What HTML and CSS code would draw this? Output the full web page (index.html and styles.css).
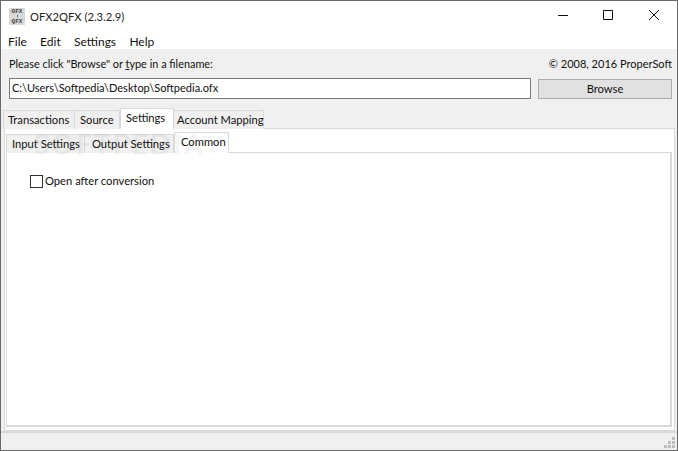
FILE: index.html
```html
<!DOCTYPE html>
<html lang="en">
<head>
<meta charset="utf-8">
<title>OFX2QFX</title>
<link rel="stylesheet" href="styles.css">
</head>
<body>
<div class="window">
  <header class="titlebar">
    <div class="app-icon"><span>OFX</span><i></i><span>QFX</span></div>
    <div class="title">OFX2QFX (2.3.2.9)</div>
    <div class="controls">
      <svg class="ctl" width="46" height="30" viewBox="0 0 46 30"><path d="M19 14.5h10" stroke="#111" fill="none"/></svg>
      <svg class="ctl" width="46" height="30" viewBox="0 0 46 30"><path d="M18.5 9.5h9v9h-9z" stroke="#111" fill="none"/></svg>
      <svg class="ctl" width="46" height="30" viewBox="0 0 46 30"><path d="M18 9l10 10M28 9l-10 10" stroke="#111" fill="none"/></svg>
    </div>
  </header>
  <nav class="menubar">
    <span class="menu">File</span><span class="menu">Edit</span><span class="menu">Settings</span><span class="menu">Help</span>
  </nav>
  <main class="content">
    <div class="file-row">
      <div class="file-col">
        <div class="file-label">Please click "Browse" or <u>t</u>ype in a filename:</div>
        <div class="file-input">C:\Users\Softpedia\Desktop\Softpedia.ofx</div>
      </div>
      <div class="browse-col">
        <div class="copyright">© 2008, 2016 ProperSoft</div>
        <div class="browse">Browse</div>
      </div>
    </div>
    <div class="tabs outer-tabs">
      <div class="tab tab-transactions">Transactions</div>
      <div class="tab tab-source">Source</div>
      <div class="tab active tab-settings">Settings</div>
      <div class="tab tab-mapping">Account Mapping</div>
    </div>
    <section class="outer-panel">
      <div class="tabs inner-tabs">
        <div class="tab tab-input">Input Settings</div>
        <div class="tab tab-output">Output Settings</div>
        <div class="tab active tab-common">Common</div>
      </div>
      <div class="inner-panel">
        <label class="check-row"><span class="checkbox"></span><span>Open after conversion</span></label>
      </div>
    </section>
  </main>
  <footer class="statusbar">
    <svg class="grip" width="12" height="12" viewBox="0 0 12 12" fill="#bdbdbd"><path d="M8 0h3v3H8zM4 4h3v3H4zM8 4h3v3H8zM0 8h3v3H0zM4 8h3v3H4zM8 8h3v3H8z"/></svg>
  </footer>
  <div class="watermark">SOFTPEDIA</div>
</div>
</body>
</html>
```
FILE: styles.css
```css
* { box-sizing: border-box; }
html, body { margin: 0; padding: 0; }
body { width: 678px; height: 451px; overflow: hidden; font-family: "Lato", "Roboto", sans-serif; font-size: 11.2px; color: #111; white-space: nowrap; }
.window { position: relative; width: 678px; height: 451px; border: 1px solid #6a6a6a; background: #f0f0f0; display: flex; flex-direction: column; }
.titlebar { height: 30px; background: #fff; display: flex; align-items: center; padding-left: 8px; }
.app-icon { width: 16px; height: 17px; background: #d8d8d8; display: flex; flex-direction: column; align-items: center; justify-content: space-between; font-family: "Liberation Mono", monospace; font-size: 6px; line-height: 7px; font-weight: 700; color: #444; }
.app-icon i { width: 1px; height: 2px; background: #666; }
.title { margin-left: 5px; font-size: 11.2px; color: #222; }
.controls { margin-left: auto; display: flex; }
.ctl { display: block; }
.menubar { height: 18px; background: #fff; display: flex; padding-left: 7px; font-size: 12px; line-height: 21px; gap: 13.3px; }
.content { flex: 1; display: flex; flex-direction: column; padding-top: 7px; min-height: 0; }
.file-row { display: flex; padding: 0 5px 0 8px; gap: 7px; }
.file-col { width: 522px; }
.browse-col { flex: 1; }
.file-label { height: 22px; line-height: 16px; font-size: 10.9px; }
.copyright { height: 23px; line-height: 16px; text-align: right; font-size: 11px; }
.file-input { height: 21px; background: #fff; border: 1px solid #7a7a7a; line-height: 18px; padding-left: 2px; font-size: 11px; }
.browse { height: 20px; background: #e1e1e1; border: 1px solid #adadad; text-align: center; line-height: 18px; }
.tabs { display: flex; align-items: flex-end; }
.outer-tabs { height: 30px; padding-left: 2px; margin-bottom: -1px; position: relative; z-index: 1; }
.tab { height: 19px; line-height: 17px; border: 1px solid #d9d9d9; border-bottom: 0; border-left: 0; background: #f0f0f0; padding-left: 4px; }
.tab-transactions { width: 72px; border-left: 1px solid #d9d9d9; }
.tab-source { width: 45px; padding-left: 5px; }
.tab.active { height: 21px; background: #fff; border: 1px solid #d9d9d9; border-bottom: 0; line-height: 18px; }
.tab-settings { width: 54px; padding-left: 5px; }
.tab-mapping { width: 90px; padding-left: 3px; }
.outer-panel { flex: 1; margin: 0 2px 0 3px; background: #fff; border: 1px solid #d9d9d9; padding: 3px 2px 3px 1px; display: flex; flex-direction: column; min-height: 0; }
.inner-tabs { height: 21px; margin-bottom: -1px; position: relative; z-index: 1; }
.tab-input { width: 79px; padding-left: 5px; border-left: 1px solid #d9d9d9; }
.tab-output { width: 89px; padding-left: 7px; }
.tab-common { width: 55px; padding-left: 6px; }
.inner-panel { flex: 1; background: #fff; border: 1px solid #d9d9d9; border-width: 1px 2px 2px 1px; padding: 20px 0 0 23px; }
.check-row { display: flex; align-items: center; gap: 2px; line-height: 16px; }
.checkbox { width: 13px; height: 13px; border: 1px solid #333; background: #fff; }
.statusbar { height: 19px; background: #f0f0f0; border-top: 2px solid #d9d9d9; display: flex; justify-content: flex-end; align-items: flex-end; }
.grip { margin: 0 1px 1px 0; }
.watermark { position: absolute; left: 33px; top: 128px; font-size: 28px; line-height: 30px; font-weight: 700; letter-spacing: 2px; color: #000; opacity: 0.04; pointer-events: none; z-index: 2; }
```
